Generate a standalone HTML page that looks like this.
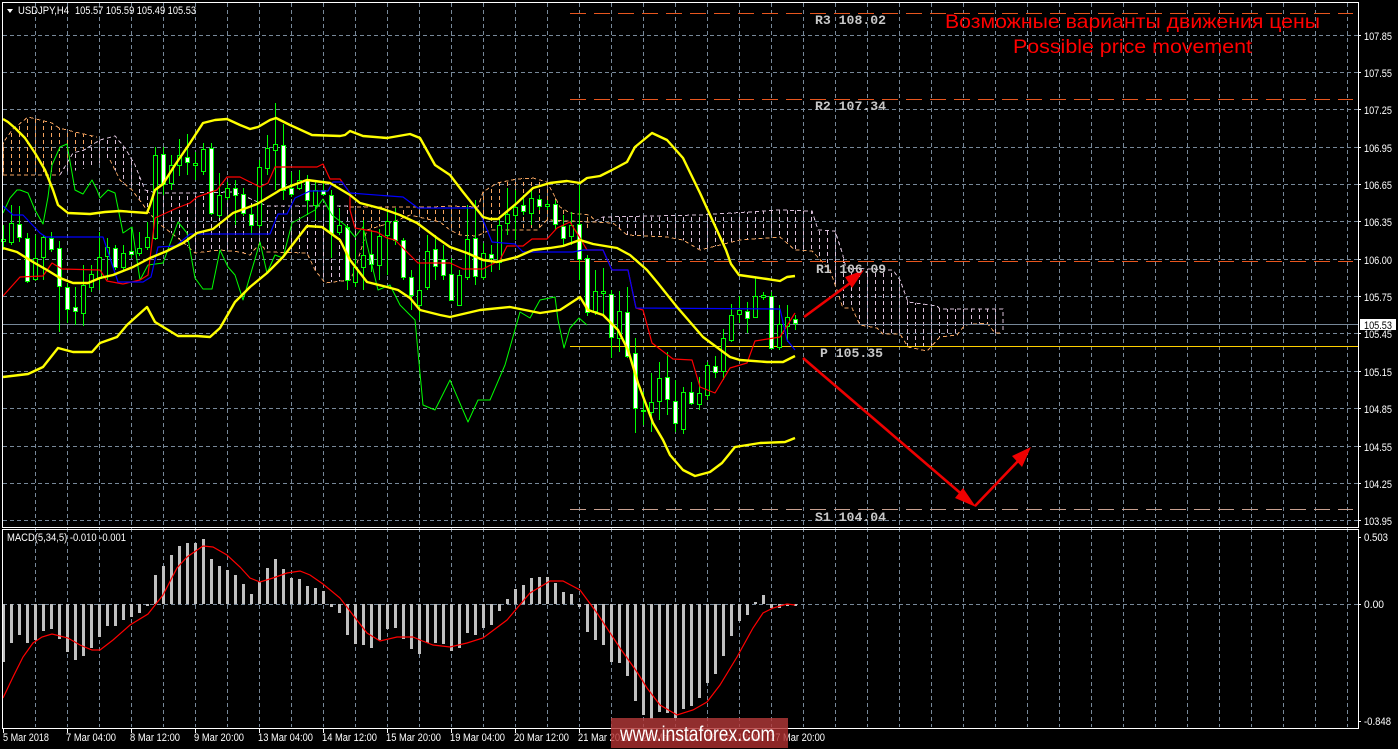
<!DOCTYPE html>
<html><head><meta charset="utf-8"><title>USDJPY,H4</title>
<style>
html,body{margin:0;padding:0;background:#000;width:1398px;height:749px;overflow:hidden}
svg{display:block}
text{font-family:"Liberation Sans",sans-serif;fill:#fff;font-size:11px}
.m{font-family:"Liberation Mono",monospace;font-weight:bold;font-size:13px;fill:#c8c8c8}
</style></head><body>
<svg width="1398" height="749" viewBox="0 0 1398 749" xmlns="http://www.w3.org/2000/svg">
<defs>
<pattern id="pw" patternUnits="userSpaceOnUse" x="3" y="0" width="8" height="7"><rect width="1" height="4" fill="#D8BFD8"/></pattern>
<pattern id="pt" patternUnits="userSpaceOnUse" x="3" y="0" width="8" height="7"><rect width="1" height="4" fill="#F4A460"/></pattern>
</defs>
<rect width="1398" height="749" fill="#000"/>
<!-- grid -->
<g stroke="#778899" fill="none" stroke-width="1" shape-rendering="crispEdges" stroke-dasharray="4 3">
<path d="M35.5 3V727M67.5 3V727M99.5 3V727M131.5 3V727M163.5 3V727M195.5 3V727M227.5 3V727M259.5 3V727M291.5 3V727M323.5 3V727M355.5 3V727M387.5 3V727M419.5 3V727M451.5 3V727M483.5 3V727M515.5 3V727M547.5 3V727M579.5 3V727M611.5 3V727M643.5 3V727M675.5 3V727M707.5 3V727M739.5 3V727M771.5 3V727M803.5 3V727M835.5 3V727M867.5 3V727M899.5 3V727M931.5 3V727M963.5 3V727M995.5 3V727M1027.5 3V727M1059.5 3V727M1091.5 3V727M1123.5 3V727M1155.5 3V727M1187.5 3V727M1219.5 3V727M1251.5 3V727M1283.5 3V727M1315.5 3V727M1347.5 3V727"/>
<path d="M3 35.5H1358M3 72.5H1358M3 109.5H1358M3 147.5H1358M3 184.5H1358M3 221.5H1358M3 259.5H1358M3 296.5H1358M3 333.5H1358M3 371.5H1358M3 408.5H1358M3 446.5H1358M3 483.5H1358M3 520.5H1358M3 604.5H1358"/>
</g>
<!-- ichimoku cloud -->
<polygon fill="url(#pt)" points="3,143 12,130 28,117 52,123 59,128 75,132 97,137 97,143 75,153 60,175 3,175"/>
<polygon fill="url(#pw)" points="63,172 73,153 84,150 100,140 115,136 125,148 135,165 145,190 157,193 187,193 235,192 267,206 350,206 390,207 395,222 367,230 355,270 350,280 325,283 315,270 307,253 267,252 260,243 250,255 240,252 220,250 195,253 183,242 157,222 147,210 132,190 120,180 110,160 95,165 80,170"/>
<polygon fill="url(#pt)" points="350,207 433,207 450,206 478,207 483,192 497,183 517,179 533,178 547,182 553,193 560,207 570,213 590,215 595,221 595,230 547,220 537,230 490,230 477,236 460,235 450,230 440,222 410,215 393,222 367,230"/>
<polygon fill="url(#pw)" points="595,221 603,217 700,215 780,210 812,211 818,230 835,231 842,252 846,268 893,270 900,280 908,302 937,306 940,309 1003,309 1003,333 995,333 987,323 965,325 957,335 940,337 927,351 908,347 900,334 883,334 877,328 860,325 852,308 843,308 830,270 812,251 795,250 780,237 740,240 700,250 683,240 667,237 627,235 613,223 595,221"/>
<g fill="none" stroke-width="1" stroke-dasharray="4 3" shape-rendering="crispEdges">
<polyline stroke="#F4A460" points="3,175 3,143 12,130 28,117 52,123 59,128 75,132 97,137"/>
<polyline stroke="#F4A460" points="3,175 60,175"/>
<polyline stroke="#D8BFD8" points="60,175 73,153 84,150 100,140 115,136 125,148 135,165 145,190 157,193 187,193 235,192 267,206 350,206"/>
<polyline stroke="#F4A460" points="110,160 120,180 132,190 147,210 157,222 183,242 195,253 220,250 240,252 250,255 260,243 267,252 307,253 315,270 325,283 350,280 355,270 367,230 393,222 410,215 440,222 450,230 460,235 477,236 490,230 537,230 547,220 613,223 627,235 667,237 683,240 700,250 740,240 780,237 795,250 812,251 830,270 843,308 852,308 860,325 877,328 883,334 900,334 908,347 927,351 940,337 957,335 965,325 987,323 995,333 1003,333"/>
<polyline stroke="#F4A460" points="350,207 433,207 450,206 478,207 483,192 497,183 517,179 533,178 547,182 553,193 560,207 570,213 590,215 595,221"/>
<polyline stroke="#D8BFD8" points="595,221 603,217 700,215 780,210 812,211 818,230 835,231 842,252 846,268 893,270 900,280 908,302 937,306 940,309 1003,309 1003,333"/>
</g>
<!-- current price and pivot lines -->
<path d="M3 324.5H1358" stroke="#778899" stroke-width="1" shape-rendering="crispEdges"/>
<g stroke="#E8561E" stroke-width="1" stroke-dasharray="16 8" shape-rendering="crispEdges" fill="none">
<path d="M570 13.5H1353M570 99.5H1353M570 261.5H1353"/>
<path d="M570 509.5H1353" stroke="#c8a090"/>
</g>
<path d="M570 346.5H1358" stroke="#FFD000" stroke-width="1" shape-rendering="crispEdges"/>
<!-- candles -->
<g shape-rendering="crispEdges" stroke="#00FF00" stroke-width="1">
<path fill="none" d="M3.5 225V250M11.5 205V245M19.5 206V242M27.5 233V283M35.5 235V281M43.5 235V280M51.5 232V252M59.5 241V332M67.5 283V323M75.5 287V325M83.5 265V326M91.5 265V292M99.5 232V290M107.5 238V280M115.5 245V270M123.5 245V270M131.5 230V258M139.5 232V256M147.5 222V250M155.5 147V240M163.5 147V195M171.5 155V190M179.5 139V176M187.5 134V175M195.5 152V180M203.5 143V175M211.5 143V215M219.5 173V218M227.5 182V200M235.5 180V225M243.5 188V216M251.5 205V235M259.5 160V228M267.5 135V175M275.5 103V190M283.5 124V200M291.5 172V197M299.5 170V190M307.5 175V215M315.5 180V220M323.5 180V196M331.5 190V258M339.5 208V235M347.5 225V290M355.5 240V287M363.5 220V290M371.5 230V272M379.5 229V280M387.5 212V275M395.5 208V245M403.5 238V280M411.5 270V310M419.5 260V320M427.5 235V290M435.5 235V280M443.5 245V280M451.5 258V300M459.5 270V305M467.5 205V280M475.5 200V285M483.5 243V280M491.5 245V272M499.5 220V270M507.5 188V235M515.5 190V240M523.5 195V215M531.5 188V225M539.5 195V210M547.5 200V210M555.5 200V230M563.5 215V245M571.5 212V245M579.5 183V280M587.5 255V316M595.5 270V315M603.5 268V316M611.5 290V358M619.5 291V352M627.5 287V358M635.5 338V433M643.5 392V425M651.5 373V432M659.5 362V420M667.5 352V415M675.5 380V432M683.5 387V434M691.5 382V405M699.5 377V410M707.5 362V400M715.5 356V378M723.5 329V380M731.5 304V342M739.5 296V323M747.5 302V333M755.5 278V318M763.5 292V300M771.5 292V349M779.5 305V350M787.5 305V342M795.5 315V330"/>
<path fill="#000" d="M1.5 239.5h4V241.5h-4zM9.5 223.5h4V242.5h-4zM33.5 258.5h4V279.5h-4zM41.5 237.5h4V257.5h-4zM81.5 285.5h4V313.5h-4zM89.5 274.5h4V287.5h-4zM97.5 257.5h4V278.5h-4zM105.5 247.5h4V256.5h-4zM121.5 253.5h4V267.5h-4zM137.5 248.5h4V253.5h-4zM145.5 237.5h4V247.5h-4zM153.5 155.5h4V238.5h-4zM169.5 165.5h4V183.5h-4zM177.5 155.5h4V165.5h-4zM193.5 163.5h4V165.5h-4zM201.5 149.5h4V171.5h-4zM217.5 195.5h4V215.5h-4zM225.5 188.5h4V197.5h-4zM257.5 167.5h4V225.5h-4zM265.5 148.5h4V168.5h-4zM273.5 144.5h4V150.5h-4zM297.5 180.5h4V188.5h-4zM313.5 190.5h4V205.5h-4zM337.5 225.5h4V232.5h-4zM353.5 267.5h4V282.5h-4zM361.5 255.5h4V267.5h-4zM377.5 236.5h4V265.5h-4zM385.5 221.5h4V235.5h-4zM417.5 290.5h4V305.5h-4zM425.5 251.5h4V287.5h-4zM457.5 275.5h4V305.5h-4zM465.5 239.5h4V277.5h-4zM481.5 253.5h4V277.5h-4zM497.5 225.5h4V262.5h-4zM505.5 214.5h4V223.5h-4zM513.5 207.5h4V215.5h-4zM529.5 198.5h4V213.5h-4zM545.5 204.5h4V206.5h-4zM569.5 225.5h4V236.5h-4zM593.5 291.5h4V311.5h-4zM601.5 291.5h4V293.5h-4zM617.5 311.5h4V338.5h-4zM649.5 402.5h4V412.5h-4zM657.5 378.5h4V401.5h-4zM681.5 392.5h4V429.5h-4zM697.5 393.5h4V404.5h-4zM705.5 365.5h4V395.5h-4zM721.5 338.5h4V371.5h-4zM729.5 315.5h4V340.5h-4zM737.5 310.5h4V314.5h-4zM753.5 296.5h4V317.5h-4zM761.5 295.5h4V297.5h-4zM777.5 324.5h4V347.5h-4zM785.5 317.5h4V326.5h-4z"/>
<path fill="#fff" d="M17.5 224.5h4V237.5h-4zM25.5 238.5h4V281.5h-4zM49.5 238.5h4V249.5h-4zM57.5 248.5h4V286.5h-4zM65.5 287.5h4V309.5h-4zM73.5 307.5h4V311.5h-4zM113.5 248.5h4V267.5h-4zM129.5 251.5h4V254.5h-4zM161.5 154.5h4V184.5h-4zM185.5 157.5h4V162.5h-4zM209.5 148.5h4V213.5h-4zM233.5 188.5h4V195.5h-4zM241.5 194.5h4V213.5h-4zM249.5 214.5h4V225.5h-4zM281.5 145.5h4V190.5h-4zM289.5 188.5h4V194.5h-4zM305.5 180.5h4V200.5h-4zM321.5 190.5h4V194.5h-4zM329.5 195.5h4V233.5h-4zM345.5 227.5h4V280.5h-4zM369.5 254.5h4V264.5h-4zM393.5 221.5h4V240.5h-4zM401.5 240.5h4V277.5h-4zM409.5 277.5h4V295.5h-4zM433.5 249.5h4V266.5h-4zM441.5 259.5h4V275.5h-4zM449.5 274.5h4V300.5h-4zM473.5 238.5h4V276.5h-4zM489.5 254.5h4V258.5h-4zM521.5 205.5h4V211.5h-4zM537.5 199.5h4V206.5h-4zM553.5 204.5h4V224.5h-4zM561.5 226.5h4V238.5h-4zM577.5 224.5h4V259.5h-4zM585.5 258.5h4V312.5h-4zM609.5 294.5h4V337.5h-4zM625.5 312.5h4V356.5h-4zM633.5 353.5h4V408.5h-4zM641.5 410.5h4V411.5h-4zM665.5 377.5h4V399.5h-4zM673.5 401.5h4V423.5h-4zM689.5 392.5h4V403.5h-4zM713.5 366.5h4V372.5h-4zM745.5 311.5h4V318.5h-4zM769.5 296.5h4V348.5h-4zM793.5 319.5h4V323.5h-4z"/>
</g>
<!-- indicator lines -->
<g fill="none" stroke-linejoin="round">
<polyline stroke="#00FF00" stroke-width="1" points="3,213 10,198 17,190 20,190 28,193 35,210 43,224 48,197 52,165 60,147 67,144 75,190 83,194 92,180 97,190 100,198 108,190 115,193 123,233 132,227 140,280 148,265 163,263 178,222 187,233 195,278 203,289 212,289 220,250 228,267 235,275 243,300 260,242 267,273 275,255 283,258 292,223 315,210 323,199 332,215 345,225 355,237 363,227 370,257 378,290 390,285 400,305 415,320 423,405 435,410 450,380 468,422 478,400 490,400 505,365 520,312 530,318 540,300 555,297 558,320 564,348 570,328 579,318 587,325"/>
<polyline stroke="#FF0000" stroke-width="1.2" points="3,296 20,277 43,276 52,263 62,269 100,270 107,281 123,284 140,280 148,275 155,218 177,208 190,203 197,197 217,190 227,177 240,177 260,187 268,183 275,167 317,167 323,164 330,179 340,179 350,193 350,210 355,228 377,232 387,238 395,240 405,250 418,263 450,263 463,269 483,269 500,260 507,246 523,246 532,239 547,239 557,228 570,222 580,238 587,250 603,250 612,270 628,270 636,308 643,310 652,343 673,359 692,360 700,387 715,393 730,368 747,363 755,341 780,337 795,313"/>
<polyline stroke="#0000FF" stroke-width="1.2" points="3,206 13,215 23,215 40,233 46,237 103,237 118,282 143,282 151,277 158,247 176,246 190,234 270,234 278,214 287,214 295,198 310,191 328,191 333,182 342,182 350,193 403,197 418,208 477,208 483,220 492,242 515,244 523,252 573,252 583,250 603,250 612,270 628,270 636,308 780,309 787,340 795,350"/>
<g stroke="#FFFF00" stroke-width="2.4">
<polyline points="3,119 8,122 15,128 25,138 35,153 45,170 53,190 58,205 68,213 90,214 105,212 120,211 147,213 150,205 155,190 163,184 175,165 190,143 203,123 215,120 227,119 240,125 250,129 258,127 270,120 276,118 290,125 312,135 340,136 345,135 350,131 363,136 387,138 410,134 420,138 435,165 450,175 463,192 483,217 490,219 498,219 517,203 533,188 550,183 567,181 580,183 587,178 600,176 612,170 627,162 635,147 652,133 667,140 683,158 700,193 726,250 731,264 739,275 753,277 767,279 780,281 787,277 795,276"/>
<polyline points="3,248 17,252 33,262 47,270 60,278 73,283 88,283 100,278 113,275 133,267 150,258 167,251 183,243 197,233 213,229 233,213 257,204 277,192 280,190 307,180 330,183 350,195 360,203 383,209 400,215 417,223 437,238 450,247 467,253 483,260 497,262 517,257 533,250 550,248 563,246 580,240 593,244 617,248 630,255 647,270 657,282 677,307 703,337 730,357 740,360 767,362 783,362 795,356"/>
<polyline points="3,377 28,374 43,367 58,348 73,352 92,352 100,343 117,337 127,325 147,307 155,322 178,336 197,336 210,337 220,328 235,302 250,287 267,273 283,257 307,226 322,227 340,240 350,260 367,282 387,287 398,290 410,298 420,310 440,315 450,317 480,310 510,307 540,313 560,310 580,297 588,310 603,315 618,330 628,350 638,383 653,423 663,440 670,455 683,470 695,476 710,472 722,463 735,447 760,443 785,442 795,438"/>
</g>
</g>
<!-- MACD -->
<path fill="none" stroke="#C0C0C0" stroke-width="3" shape-rendering="crispEdges" d="M3.5 604V662M11.5 604V643M19.5 604V635M27.5 604V643M35.5 604V640M43.5 604V631M51.5 604V629M59.5 604V639M67.5 604V652M75.5 604V660M83.5 604V656M91.5 604V648M99.5 604V637M107.5 604V626M115.5 604V626M123.5 604V620M131.5 604V617M139.5 604V613M147.5 604V606M155.5 604V575M163.5 604V566M171.5 604V555M179.5 604V546M187.5 604V543M195.5 604V543M203.5 604V539M211.5 604V559M219.5 604V566M227.5 604V570M235.5 604V575M243.5 604V584M251.5 604V594M259.5 604V582M267.5 604V568M275.5 604V559M283.5 604V569M291.5 604V578M299.5 604V579M307.5 604V586M315.5 604V588M323.5 604V591M331.5 604V607M339.5 604V613M347.5 604V635M355.5 604V644M363.5 604V645M371.5 604V648M379.5 604V640M387.5 604V629M395.5 604V628M403.5 604V639M411.5 604V649M419.5 604V654M427.5 604V643M435.5 604V643M443.5 604V644M451.5 604V651M459.5 604V648M467.5 604V633M475.5 604V635M483.5 604V628M491.5 604V625M499.5 604V611M507.5 604V599M515.5 604V589M523.5 604V585M531.5 604V578M539.5 604V577M547.5 604V577M555.5 604V583M563.5 604V592M571.5 604V594M579.5 604V607M587.5 604V632M595.5 604V640M603.5 604V645M611.5 604V662M619.5 604V663M627.5 604V676M635.5 604V701M643.5 604V715M651.5 604V719M659.5 604V712M667.5 604V713M675.5 604V718M683.5 604V709M691.5 604V706M699.5 604V698M707.5 604V683M715.5 604V674M723.5 604V656M731.5 604V636M739.5 604V621M747.5 604V615M755.5 604V602M763.5 604V595M771.5 604V608M779.5 604V608M787.5 604V606M795.5 604V606"/>
<polyline fill="none" stroke="#FF0000" stroke-width="1.2" points="3,698 13,677 23,657 33,643 42,637 52,634 68,638 80,645 92,650 100,650 113,640 130,625 148,614 163,595 177,568 187,557 203,546 213,547 227,555 240,567 250,578 260,582 273,578 287,573 300,571 310,575 323,584 340,598 353,615 367,633 380,641 397,637 413,637 420,640 433,645 450,647 467,643 483,638 507,620 530,593 550,581 563,581 580,590 597,613 620,648 637,672 647,688 660,705 677,715 693,710 707,702 720,685 737,657 753,628 763,613 773,608 787,604 795,605"/>
<!-- frames -->
<g fill="none" stroke="#fff" stroke-width="1" shape-rendering="crispEdges">
<rect x="2.5" y="2.5" width="1356" height="525"/>
<rect x="2.5" y="529.5" width="1356" height="199"/>
<path d="M1358 35.5h3M1358 72.5h3M1358 109.5h3M1358 147.5h3M1358 184.5h3M1358 221.5h3M1358 259.5h3M1358 296.5h3M1358 333.5h3M1358 371.5h3M1358 408.5h3M1358 446.5h3M1358 483.5h3M1358 520.5h3M1358 537.5h3M1358 604.5h3M1358 721.5h3"/>
<path d="M3.5 728v5M67.5 728v5M131.5 728v5M195.5 728v5M259.5 728v5M323.5 728v5M387.5 728v5M451.5 728v5M515.5 728v5M579.5 728v5M643.5 728v5M707.5 728v5M771.5 728v5"/>
</g>
<!-- arrows -->
<g stroke="#EE0000" stroke-width="2.6" fill="none">
<path d="M804 317L853 281"/>
<path d="M803 358L965 497"/>
<path d="M975 506L1019 460"/>
</g>
<g fill="#F00000" stroke="none">
<polygon points="864,270 845,277 852,288"/>
<polygon points="976,507 963,488 955,498"/>
<polygon points="1031,447 1012,456 1022,467"/>
</g>
<!-- header -->
<polygon points="7,9 13,9 10,13" fill="#fff"/>
<text x="18" y="14" textLength="51" lengthAdjust="spacingAndGlyphs">USDJPY,H4</text>
<text x="75" y="14" textLength="121" lengthAdjust="spacingAndGlyphs">105.57 105.59 105.49 105.53</text>
<text x="7" y="541" textLength="119" lengthAdjust="spacingAndGlyphs">MACD(5,34,5) -0.010 -0.001</text>
<!-- pivot labels -->
<text class="m" x="815" y="24" textLength="71" lengthAdjust="spacingAndGlyphs">R3 108.02</text>
<text class="m" x="815" y="110" textLength="71" lengthAdjust="spacingAndGlyphs">R2 107.34</text>
<text class="m" x="816" y="273" textLength="70" lengthAdjust="spacingAndGlyphs">R1 106.09</text>
<text class="m" x="820" y="357" textLength="63" lengthAdjust="spacingAndGlyphs">P 105.35</text>
<text class="m" x="815" y="521" textLength="71" lengthAdjust="spacingAndGlyphs">S1 104.04</text>
<!-- title -->
<text x="945" y="28" textLength="375" lengthAdjust="spacingAndGlyphs" style="font-size:19px;fill:#f00">Возможные варианты движения цены</text>
<text x="1013" y="53" textLength="239" lengthAdjust="spacingAndGlyphs" style="font-size:19px;fill:#f00">Possible price movement</text>
<!-- price axis -->
<g>
<text x="1364" y="40" textLength="28" lengthAdjust="spacingAndGlyphs">107.85</text>
<text x="1364" y="77" textLength="28" lengthAdjust="spacingAndGlyphs">107.55</text>
<text x="1364" y="114" textLength="28" lengthAdjust="spacingAndGlyphs">107.25</text>
<text x="1364" y="152" textLength="28" lengthAdjust="spacingAndGlyphs">106.95</text>
<text x="1364" y="189" textLength="28" lengthAdjust="spacingAndGlyphs">106.65</text>
<text x="1364" y="226" textLength="28" lengthAdjust="spacingAndGlyphs">106.35</text>
<text x="1364" y="264" textLength="28" lengthAdjust="spacingAndGlyphs">106.00</text>
<text x="1364" y="301" textLength="28" lengthAdjust="spacingAndGlyphs">105.75</text>
<text x="1364" y="338" textLength="28" lengthAdjust="spacingAndGlyphs">105.45</text>
<text x="1364" y="376" textLength="28" lengthAdjust="spacingAndGlyphs">105.15</text>
<text x="1364" y="413" textLength="28" lengthAdjust="spacingAndGlyphs">104.85</text>
<text x="1364" y="451" textLength="28" lengthAdjust="spacingAndGlyphs">104.55</text>
<text x="1364" y="488" textLength="28" lengthAdjust="spacingAndGlyphs">104.25</text>
<text x="1364" y="525" textLength="28" lengthAdjust="spacingAndGlyphs">103.95</text>
<text x="1364" y="541" textLength="24" lengthAdjust="spacingAndGlyphs">0.503</text>
<text x="1364" y="608" textLength="20" lengthAdjust="spacingAndGlyphs">0.00</text>
<text x="1364" y="725" textLength="27" lengthAdjust="spacingAndGlyphs">-0.848</text>
<rect x="1360" y="319" width="36" height="11" fill="#fff"/>
<text x="1364" y="329" textLength="28" lengthAdjust="spacingAndGlyphs" style="fill:#000">105.53</text>
</g>
<!-- time axis -->
<g>
<text x="3" y="741" textLength="46" lengthAdjust="spacingAndGlyphs">5 Mar 2018</text>
<text x="66" y="741" textLength="50" lengthAdjust="spacingAndGlyphs">7 Mar 04:00</text>
<text x="130" y="741" textLength="50" lengthAdjust="spacingAndGlyphs">8 Mar 12:00</text>
<text x="194" y="741" textLength="50" lengthAdjust="spacingAndGlyphs">9 Mar 20:00</text>
<text x="258" y="741" textLength="55" lengthAdjust="spacingAndGlyphs">13 Mar 04:00</text>
<text x="322" y="741" textLength="55" lengthAdjust="spacingAndGlyphs">14 Mar 12:00</text>
<text x="386" y="741" textLength="55" lengthAdjust="spacingAndGlyphs">15 Mar 20:00</text>
<text x="450" y="741" textLength="55" lengthAdjust="spacingAndGlyphs">19 Mar 04:00</text>
<text x="514" y="741" textLength="55" lengthAdjust="spacingAndGlyphs">20 Mar 12:00</text>
<text x="578" y="741" textLength="55" lengthAdjust="spacingAndGlyphs">21 Mar 20:00</text>
<text x="642" y="741" textLength="55" lengthAdjust="spacingAndGlyphs">23 Mar 04:00</text>
<text x="706" y="741" textLength="55" lengthAdjust="spacingAndGlyphs">26 Mar 12:00</text>
<text x="770" y="741" textLength="55" lengthAdjust="spacingAndGlyphs">27 Mar 20:00</text>
</g>
<!-- watermark -->
<rect x="611" y="718" width="177" height="30" fill="#b03030" fill-opacity="0.8"/>
<rect x="611" y="718" width="177" height="10" fill="#fff" fill-opacity="0.04"/>
<text x="620" y="741" textLength="155" lengthAdjust="spacingAndGlyphs" style="font-size:21px;fill:#fff">www.instaforex.com</text>
</svg>
</body></html>
